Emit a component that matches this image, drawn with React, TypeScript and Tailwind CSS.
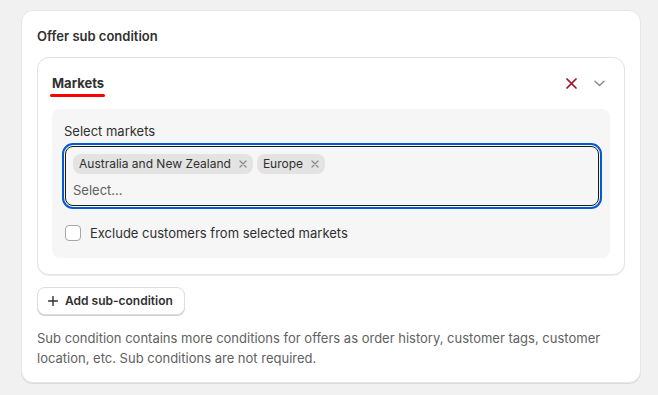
import React from "react";

function TagX() {
  return (
    <svg width="8" height="8" viewBox="0 0 8 8" className="ml-[8px]">
      <path d="M1 1 L7 7 M7 1 L1 7" stroke="#8a8a8a" strokeWidth="1.3" strokeLinecap="round" />
    </svg>
  );
}

function Tag({ label }: { label: string }) {
  return (
    <span className="inline-flex h-[20px] items-center rounded-[8px] bg-[#e3e3e3] pl-[6px] pr-[6px] text-[12px] leading-[20px] text-[#303030]">
      {label}
      <TagX />
    </span>
  );
}

export default function App() {
  return (
    <div
      className="min-h-[395px] w-[658px] bg-[#f1f1f1] pl-[21px] pt-[10px]"
      style={{ fontFamily: "Inter, 'Noto Sans', sans-serif" }}
    >
      <div className="w-[620px] rounded-[12px] border border-[#e6e6e6] bg-white px-[15px] pb-[14px] pt-[15px] shadow-[0_1px_0_0_rgba(26,26,26,0.1)]">
        <div className="text-[13px] font-semibold leading-[20px] text-[#303030]">Offer sub condition</div>

        <div className="mt-[11px] rounded-[12px] border border-[#e3e3e3] bg-white px-[14px] pb-[16px] pt-[15px] shadow-[0_1px_0_0_rgba(26,26,26,0.07)]">
          <div className="flex items-start justify-between">
            <div className="flex flex-col items-start">
              <div className="text-[13px] font-bold leading-[20px] text-[#303030]">Markets</div>
              <div className="-ml-[2px] mt-[1px] h-[3px] w-[55px] rounded-full bg-[#ff0000]" />
            </div>
            <div className="flex h-[20px] items-center gap-[17px] pr-[5px]">
              <svg width="11" height="11" viewBox="0 0 11 11">
                <path d="M1 1 L10 10 M10 1 L1 10" stroke="#9b0f2a" strokeWidth="1.7" strokeLinecap="round" />
              </svg>
              <svg width="11" height="7" viewBox="0 0 11 7">
                <path d="M1 1.2 L5.5 5.6 L10 1.2" stroke="#8a8a8a" strokeWidth="1.4" fill="none" strokeLinecap="round" strokeLinejoin="round" />
              </svg>
            </div>
          </div>

          <div className="mt-[12px] rounded-[8px] bg-[#f6f6f6] pb-[15px] pl-[12px] pr-[11px] pt-[12px]">
            <div className="text-[13px] leading-[20px] text-[#303030]">Select markets</div>
            <div className="ml-[1px] mt-[5px] rounded-[8px] border border-[#1a1a1a] pb-[5px] pl-[7px] pr-[7px] pt-[7px] outline outline-2 outline-offset-1 outline-[#005bd3]">
              <div className="flex gap-[4px]">
                <Tag label="Australia and New Zealand" />
                <Tag label="Europe" />
              </div>
              <div className="mt-[6px] text-[13px] leading-[20px] text-[#616161]">Select...</div>
            </div>
            <div className="mt-[17px] flex items-center gap-[9px] pl-[1px]">
              <span className="block h-[16px] w-[16px] rounded-[4px] border border-[#a6a6a6] bg-white" />
              <span className="text-[13px] leading-[20px] text-[#303030]">Exclude customers from selected markets</span>
            </div>
          </div>
        </div>

        <button className="mt-[12px] flex h-[28px] items-center rounded-[8px] border border-[#dedede] bg-white pl-[10px] pr-[11px] shadow-[0_1px_0_0_#cfcfcf]">
          <svg width="10" height="10" viewBox="0 0 10 10">
            <path d="M5 0.5 V9.5 M0.5 5 H9.5" stroke="#303030" strokeWidth="1.4" strokeLinecap="round" />
          </svg>
          <span className="ml-[7px] text-[12px] font-semibold leading-[20px] text-[#303030]">Add sub-condition</span>
        </button>

        <p className="mt-[13px] text-[13px] leading-[20px] text-[#616161]">
          Sub condition contains more conditions for offers as order history, customer tags, customer location, etc. Sub conditions are not required.
        </p>
      </div>
    </div>
  );
}
